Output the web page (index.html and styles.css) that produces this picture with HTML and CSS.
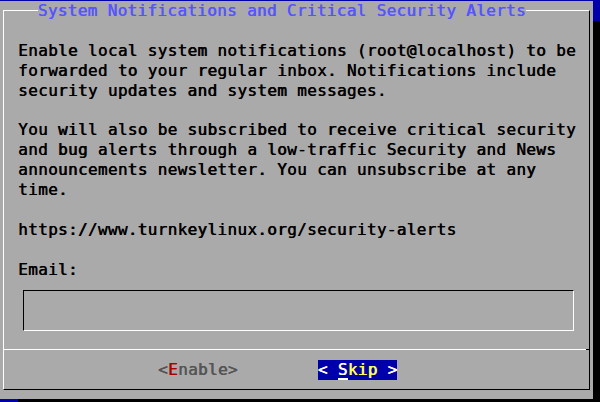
FILE: index.html
```html
<!DOCTYPE html>
<html lang="en">
  <head>
    <meta charset="utf-8">
    <title>System Notifications and Critical Security Alerts</title>
    <link rel="stylesheet" href="styles.css">
  </head>
  <body>
    <div class="dialog">
      <fieldset class="frame">
        <legend class="title">System Notifications and Critical Security Alerts</legend>

        <div class="content">
          <p class="msg">Enable local system notifications (root@localhost) to be
forwarded to your regular inbox. Notifications include
security updates and system messages.</p>
          <p class="msg">You will also be subscribed to receive critical security
and bug alerts through a low-traffic Security and News
announcements newsletter. You can unsubscribe at any
time.</p>
          <p class="msg">https://www.turnkeylinux.org/security-alerts</p>
          <label class="label" for="email">Email:</label>
          <input id="email" class="field" type="email">
        </div>

        <div class="sep"></div>

        <div class="buttons">
          <button class="btn" type="button">&lt;<span class="hot">E</span>nable&gt;</button>
          <button class="btn btn-on" type="button">&lt; <span class="key">S</span><span class="rest">kip</span> &gt;</button>
        </div>
      </fieldset>
    </div>
  </body>
</html>
```

FILE: styles.css
```css
body {
  margin: 0;
  padding-top: 1px;
  height: 401px;
  overflow: hidden;
  background: #0000aa;
  font-family: "DejaVu Sans Mono", "Liberation Mono", monospace;
  font-size: 16px;
  letter-spacing: 0.33px;
  line-height: 19.9px;
  color: #000;
  /* console font is drawn with double pixel strokes */
  text-shadow: 0.6px 0 0 currentColor;
}

/* grey window + black shadow, 2 columns right / 1 row down */
.dialog {
  box-sizing: border-box;
  width: 595px;
  height: 398px;
  margin-left: -2px;
  padding: 0 3px 0 5px;
  background: #aaaaaa;
  box-shadow: 20px 20px 0 #000;
}

.frame {
  box-sizing: border-box;
  height: 389px;
  min-inline-size: 0;
  margin: 0;
  padding: 0;
  border: 1px solid;
  border-color: #fff #000 #000 #fff;
}

.title {
  margin-left: 33.7px;
  padding: 0;
  color: #5555ff;
  line-height: 19.9px;
}

.content {
  padding: 19.9px 0 0 14px;
}

.msg {
  margin: 0 0 19.9px;
  white-space: pre;
}

.label {
  display: block;
}

.field {
  display: block;
  box-sizing: border-box;
  width: 551px;
  height: 41px;
  margin: 10px 0 0 5px;
  padding: 0;
  border: 1px solid;
  border-color: #000 #fff #fff #000;
  background: transparent;
  font: inherit;
  outline: none;
}

.sep {
  height: 1px;
  margin-top: 18.6px;
  background: linear-gradient(to right, #fff calc(100% - 3px), #000 0);
}

.buttons {
  display: flex;
  height: 19.9px;
  margin-top: 10px;
  padding-left: 154px;
}

.btn {
  height: 19.9px;
  margin: 0;
  padding: 0;
  border: none;
  background: none;
  font: inherit;
  letter-spacing: inherit;
  line-height: 19.9px;
  color: #555555;
  text-shadow: inherit;
}

.btn .hot {
  color: #aa0000;
}

.btn-on {
  margin-left: 80px;
  background: #0000aa;
  color: #fff;
}

.btn-on .key {
  display: inline-block;
  height: 19.9px;
  box-shadow: inset 0 -2px 0 #fff;
}

.btn-on .rest {
  color: #ffff55;
}
```
